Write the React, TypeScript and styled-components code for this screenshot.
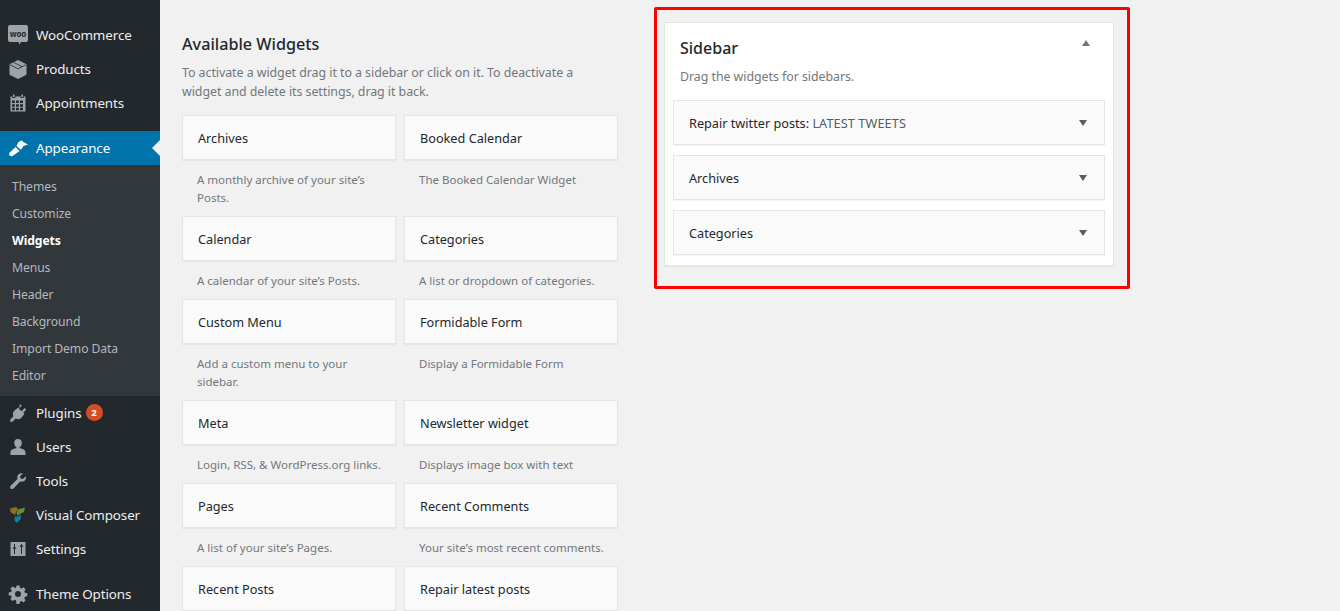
import React from "react";
import styled, { createGlobalStyle } from "styled-components";

const GlobalStyle = createGlobalStyle`
  html, body {
    margin: 0;
    padding: 0;
    background: #f1f1f1;
    overflow: hidden;
  }
  body {
    font-family: "Noto Sans", "Open Sans", sans-serif;
    font-size: 13px;
    color: #23282d;
  }
`;

const Page = styled.div`
  display: flex;
  width: 1340px;
  height: 611px;
  overflow: hidden;
`;

const Menu = styled.nav`
  width: 160px;
  flex: none;
  background: #23282d;
  padding-top: 18px;
  box-sizing: border-box;
`;

const MenuGroup = styled.div<{ $gap?: number }>`
  margin-bottom: ${(p) => p.$gap ?? 0}px;
`;

const MenuItem = styled.div<{ $active?: boolean }>`
  position: relative;
  display: flex;
  align-items: center;
  height: 34px;
  box-sizing: border-box;
  padding: 0 0 1px 8px;
  font-size: 13.4px;
  letter-spacing: -0.1px;
  color: ${(p) => (p.$active ? "#fff" : "#eee")};
  background: ${(p) => (p.$active ? "#0073aa" : "transparent")};

  ${(p) =>
    p.$active
      ? `&::after {
    content: "";
    position: absolute;
    right: 0;
    top: 9px;
    border: 8px solid transparent;
    border-right-color: #f1f1f1;
    border-left-width: 0;
  }`
      : ""}
`;

const IconSlot = styled.span`
  width: 20px;
  height: 20px;
  margin-right: 8px;
  flex: none;
  display: flex;
  align-items: center;
  justify-content: center;

  svg {
    display: block;
  }
`;

const Badge = styled.span`
  display: inline-flex;
  align-items: center;
  justify-content: center;
  width: 17px;
  height: 17px;
  margin-left: 4px;
  border-radius: 50%;
  background: #d54e21;
  color: #fff;
  font-size: 9.5px;
  font-weight: 700;
`;

const SubMenu = styled.div`
  background: #32373c;
  padding: 8px 0 7px;
`;

const SubItem = styled.div<{ $current?: boolean }>`
  height: 27px;
  line-height: 27px;
  padding-left: 12px;
  font-size: 12.2px;
  letter-spacing: -0.1px;
  color: ${(p) => (p.$current ? "#fff" : "#b4b9be")};
  font-weight: ${(p) => (p.$current ? 700 : 400)};
`;

const Content = styled.main`
  flex: 1;
  display: flex;
  align-items: flex-start;
  padding-left: 22px;
`;

const Available = styled.section`
  width: 436px;
  flex: none;
  padding-top: 33px;
`;

const Title = styled.h2`
  margin: 0;
  font-size: 16.2px;
  line-height: 22px;
  font-weight: 500;
  color: #23282d;
`;

const Lead = styled.p`
  margin: 8px 0 14px;
  max-width: 400px;
  font-size: 12.4px;
  line-height: 19px;
  color: #72777c;
  letter-spacing: -0.05px;
`;

const WidgetGrid = styled.div`
  display: grid;
  grid-template-columns: 214px 214px;
  column-gap: 8px;
`;

const WidgetCard = styled.div`
  height: 45px;
  box-sizing: border-box;
  background: #fafafa;
  border: 1px solid #e5e5e5;
  box-shadow: 0 1px 1px rgba(0, 0, 0, 0.04);
  padding: 1px 15px 0;
  display: flex;
  align-items: center;
  font-size: 12.7px;
  color: #23282d;
`;

const WidgetDesc = styled.div`
  padding: 11px 8px 9px 15px;
  font-size: 11.5px;
  line-height: 18px;
  color: #72777c;
`;

const HighlightBox = styled.div`
  margin-left: 36px;
  margin-top: 7px;
  width: 476px;
  height: 282px;
  flex: none;
  box-sizing: border-box;
  border: 3px solid #f00;
  border-radius: 2px;
  padding: 12px 13px 0 7px;
`;

const SidebarPanel = styled.section`
  position: relative;
  box-sizing: border-box;
  width: 450px;
  height: 244px;
  background: #fff;
  border: 1px solid #e5e5e5;
  box-shadow: 0 1px 1px rgba(0, 0, 0, 0.04);
  padding: 14px 8px 0;
`;

const PanelTitle = styled.h2`
  margin: 0 0 0 7px;
  font-size: 16px;
  line-height: 22px;
  font-weight: 500;
`;

const PanelNote = styled.p`
  margin: 8px 0 14px 7px;
  font-size: 12.4px;
  line-height: 19px;
  color: #72777c;
  letter-spacing: -0.05px;
`;

const Caret = styled.span<{ $up?: boolean }>`
  width: 0;
  height: 0;
  border-left: 4px solid transparent;
  border-right: 4px solid transparent;
  ${(p) =>
    p.$up
      ? "border-bottom: 6px solid #72777c;"
      : "border-top: 6px solid #555d66; margin-top: 1px;"}
`;

const PanelCaret = styled.span`
  position: absolute;
  top: 17px;
  right: 23px;
  display: flex;
`;

const SidebarWidget = styled.div`
  height: 45px;
  box-sizing: border-box;
  background: #fafafa;
  border: 1px solid #e5e5e5;
  box-shadow: 0 1px 1px rgba(0, 0, 0, 0.04);
  margin-bottom: 10px;
  padding: 0 17px 0 15px;
  display: flex;
  align-items: center;
  justify-content: space-between;
  font-size: 12.7px;
`;

const InWidgetTitle = styled.span`
  color: #555d66;
  letter-spacing: 0.1px;
`;

const Wp = ({ children, color = "#9ea3a8" }: { children: React.ReactNode; color?: string }) => (
  <svg width="20" height="20" viewBox="0 0 20 20" fill={color}>
    {children}
  </svg>
);

const WooIcon = () => (
  <svg width="20" height="20" viewBox="0 0 20 20">
    <path d="M2 0h16a2 2 0 0 1 2 2v13a2 2 0 0 1-2 2h-5l-1.500 2.500L10.500 17H2a2 2 0 0 1-2-2V2a2 2 0 0 1 2-2z" fill="#9ea3a8" />
    <text x="10" y="11.500" textAnchor="middle" fontSize="8" fontWeight="700" fill="#23282d">
      woo
    </text>
  </svg>
);

const CubeIcon = () => (
  <Wp>
    <path d="M10 1l8.500 4.200v10.500L10 20l-8.500-4.300V5.200z" />
    <path d="M1.800 5.600L10 9.800l8.200-4.200M5.500 3.300l8.500 4.400" fill="none" stroke="#23282d" strokeWidth=".8" />
  </Wp>
);

const CalendarIcon = () => (
  <Wp>
    <path d="M5 1.500h1.500V4H5zM13.500 1.500H15V4h-1.500z" />
    <path fillRule="evenodd" d="M2.500 3.500h1.800v1.500h3V3.500h5.400v1.500h3V3.500h1.800V18.500h-15zM4 7.500v2.500h2.800V7.500zm4 0v2.500h2.800V7.500zm4 0v2.500h3V7.500zM4 11.200v2.500h2.800v-2.500zm4 0v2.500h2.800v-2.500zm4 0v2.500h3v-2.500zM4 14.800v2.400h2.800v-2.400zm4 0v2.400h2.800v-2.400zm4 0v2.400h3v-2.400z" />
  </Wp>
);

const BrushIcon = () => (
  <Wp color="#fff">
    <path d="M8.500 8L10.500 4 14 2.200 15.200 4 20 6.500 15.500 8 13 11.800z" />
    <path d="M7.500 9L11.500 13 4.500 18c-1.500.8-3.800-.4-3.500-2.200.1-.5.400-.9.800-1.200z" />
  </Wp>
);

const PlugIcon = () => (
  <Wp>
    <path d="M11.800 1l1.900 1.500-2.700 3.400 2.700 2.300 2.800-3.200 1.800 1.500-3 3.300 1.100 1.100-3.500 4.300c-1.600 1.500-3.700 1.400-5.200.4l-3 2.900-2.700.5.500-2.800 3-3c-.9-1.700-.9-3.800.5-5.300l4.200-3.300 1.100 1.100z" />
  </Wp>
);

const UserIcon = () => (
  <Wp>
    <path d="M10 2a3.800 4.200 0 0 1 3.800 4.200c0 1.900-1.100 3.400-2.300 4 0 .5.100.9.600 1.100 2.600.6 5.400 1.500 5.400 4.200V18H2.500v-2.500c0-2.700 2.800-3.600 5.400-4.200.5-.2.600-.6.600-1.100-1.200-.6-2.300-2.100-2.300-4A3.800 4.200 0 0 1 10 2z" />
  </Wp>
);

const WrenchIcon = () => (
  <Wp>
    <path d="M17.800 5.200c.5 1.800 0 3.400-1.200 4.500-1.300 1.100-3 1.400-4.500.8L5.500 17.500c-.8.800-2 .8-2.800.1-.8-.8-.8-2.100 0-2.900L9.500 8c-.6-1.500-.3-3.200.9-4.400C11.600 2.400 13.300 2 14.800 2.500L12 5.400l.6 2.200 2.300.5z" />
  </Wp>
);

const ComposerIcon = () => (
  <svg width="20" height="20" viewBox="0 0 20 20">
    <path d="M2 3.500L8 2l2 2-2 3-1 3-4.500-3z" fill="#8f6f22" />
    <path d="M10 4.500L17 2.500 16 7 12 9 9.500 11 8.500 7.500z" fill="#6c8a3a" />
    <path d="M7 11L9 12 13 10 12.500 14.500 8.500 18 6.500 15z" fill="#0f7fa8" />
  </svg>
);

const SlidersIcon = () => (
  <Wp>
    <path fillRule="evenodd" d="M2.500 3h15v14h-15zM6 5v3.500H4.800v1.200H6V15h1V9.700h1.200V8.500H7V5zm7 0v1.500h-1.200v1.200H13V15h1V7.700h1.200V6.500H14V5z" />
  </Wp>
);

const GearIcon = () => (
  <Wp>
    <path fillRule="evenodd" d="M8.500 1.500h3l.5 2.400 1.400.6 2.100-1.300 2.100 2.100-1.300 2.100.6 1.400 2.400.5v3l-2.400.5-.6 1.400 1.300 2.100-2.100 2.100-2.100-1.300-1.400.6-.5 2.400h-3L8 16.400l-1.400-.6-2.100 1.300-2.100-2.100 1.300-2.100-.6-1.400L.7 11.500v-3l2.400-.5.6-1.400-1.300-2.100 2.100-2.100 2.100 1.300L8 3.900zM10 7a3 3 0 1 0 0 6 3 3 0 0 0 0-6z" />
  </Wp>
);

const topItems = [
  { label: "WooCommerce", icon: <WooIcon /> },
  { label: "Products", icon: <CubeIcon /> },
  { label: "Appointments", icon: <CalendarIcon /> },
];

const subItems = ["Themes", "Customize", "Widgets", "Menus", "Header", "Background", "Import Demo Data", "Editor"];

const lowerItems = [
  { label: "Plugins", icon: <PlugIcon />, badge: 2 },
  { label: "Users", icon: <UserIcon /> },
  { label: "Tools", icon: <WrenchIcon /> },
  { label: "Visual Composer", icon: <ComposerIcon /> },
  { label: "Settings", icon: <SlidersIcon /> },
];

const widgets = [
  { name: "Archives", desc: "A monthly archive of your site’s Posts." },
  { name: "Booked Calendar", desc: "The Booked Calendar Widget" },
  { name: "Calendar", desc: "A calendar of your site’s Posts." },
  { name: "Categories", desc: "A list or dropdown of categories." },
  { name: "Custom Menu", desc: "Add a custom menu to your sidebar." },
  { name: "Formidable Form", desc: "Display a Formidable Form" },
  { name: "Meta", desc: "Login, RSS, & WordPress.org links." },
  { name: "Newsletter widget", desc: "Displays image box with text" },
  { name: "Pages", desc: "A list of your site’s Pages." },
  { name: "Recent Comments", desc: "Your site’s most recent comments." },
  { name: "Recent Posts", desc: "" },
  { name: "Repair latest posts", desc: "" },
];

export default function App() {
  return (
    <Page>
      <GlobalStyle />
      <Menu>
        <MenuGroup $gap={11}>
          {topItems.map((item) => (
            <MenuItem key={item.label}>
              <IconSlot>{item.icon}</IconSlot>
              {item.label}
            </MenuItem>
          ))}
        </MenuGroup>
        <MenuItem $active>
          <IconSlot>
            <BrushIcon />
          </IconSlot>
          Appearance
        </MenuItem>
        <SubMenu>
          {subItems.map((label) => (
            <SubItem key={label} $current={label === "Widgets"}>
              {label}
            </SubItem>
          ))}
        </SubMenu>
        <MenuGroup $gap={11}>
          {lowerItems.map((item) => (
            <MenuItem key={item.label}>
              <IconSlot>{item.icon}</IconSlot>
              {item.label}
              {item.badge ? <Badge>{item.badge}</Badge> : null}
            </MenuItem>
          ))}
        </MenuGroup>
        <MenuItem>
          <IconSlot>
            <GearIcon />
          </IconSlot>
          Theme Options
        </MenuItem>
      </Menu>
      <Content>
        <Available>
          <Title>Available Widgets</Title>
          <Lead>
            To activate a widget drag it to a sidebar or click on it. To deactivate a widget and delete its settings,
            drag it back.
          </Lead>
          <WidgetGrid>
            {widgets.map((w) => (
              <div key={w.name}>
                <WidgetCard>{w.name}</WidgetCard>
                <WidgetDesc>{w.desc}</WidgetDesc>
              </div>
            ))}
          </WidgetGrid>
        </Available>
        <HighlightBox>
          <SidebarPanel>
            <PanelTitle>Sidebar</PanelTitle>
            <PanelCaret>
              <Caret $up />
            </PanelCaret>
            <PanelNote>Drag the widgets for sidebars.</PanelNote>
            <SidebarWidget>
              <span>
                Repair twitter posts: <InWidgetTitle>LATEST TWEETS</InWidgetTitle>
              </span>
              <Caret />
            </SidebarWidget>
            <SidebarWidget>
              Archives
              <Caret />
            </SidebarWidget>
            <SidebarWidget>
              Categories
              <Caret />
            </SidebarWidget>
          </SidebarPanel>
        </HighlightBox>
      </Content>
    </Page>
  );
}
